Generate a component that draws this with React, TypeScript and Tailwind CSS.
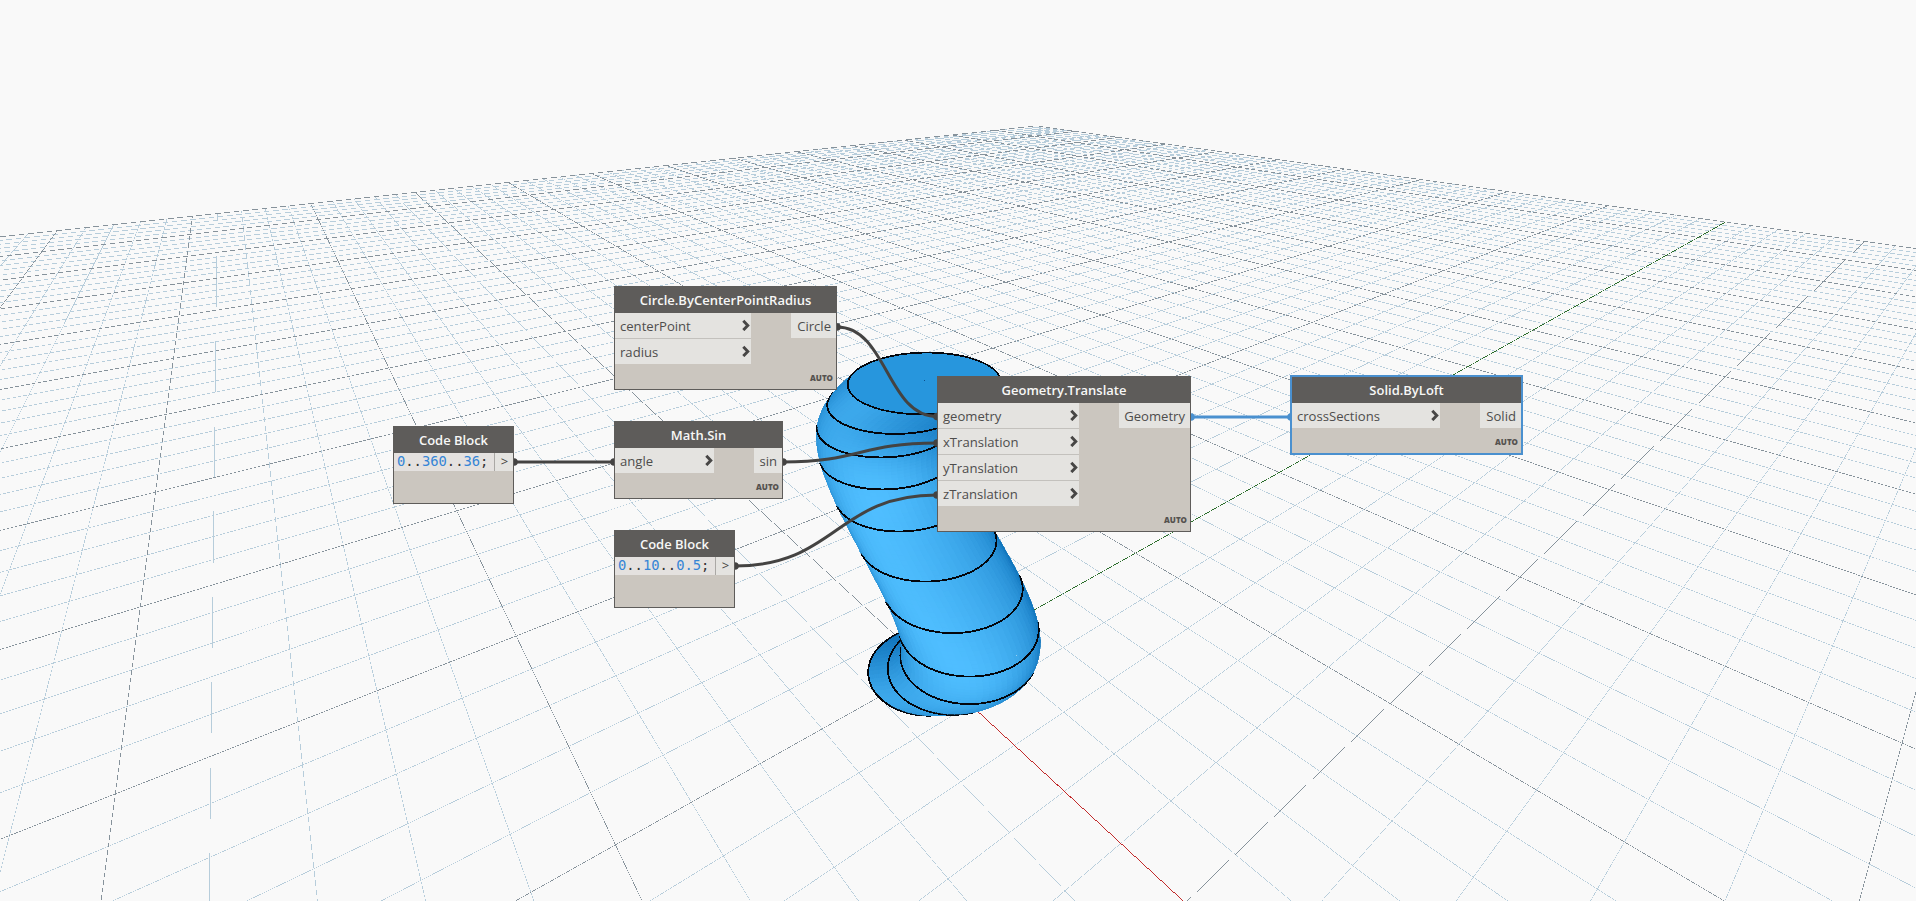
import React from 'react';

type Vec = [number, number];
type Vec3 = [number, number, number];

const WIDTH = 1916;
const HEIGHT = 901;

/* ---------- Camera: origin and vanishing points of the three world axes ---------- */
const ORIGIN: Vec = [930.7, 668];
const VANISH_X: Vec = [219.67, 12];
const VANISH_Y: Vec = [2100, 12];
const VANISH_Z: Vec = [958, 1935];
const SCALE_X = 0.05274;
const SCALE_Y = 0.04247;
const SCALE_Z = 0.03695;
const CAMERA: Vec3 = [7.86, -5.75, 9.23];
const LIGHT: Vec3 = [0.6, -0.69, 0.4];

function project(x: number, y: number, z: number): Vec {
  const a = -x * SCALE_X;
  const b = y * SCALE_Y;
  const c = -z * SCALE_Z;
  const w = 1 + a + b + c;
  return [
    (ORIGIN[0] + a * VANISH_X[0] + b * VANISH_Y[0] + c * VANISH_Z[0]) / w,
    (ORIGIN[1] + a * VANISH_X[1] + b * VANISH_Y[1] + c * VANISH_Z[1]) / w,
  ];
}

/* ---------- Ground grid ---------- */
const EXTENT = 50;
const GRID_LINE = 0.6;

function thinLine(p: Vec, q: Vec, width: number): string {
  const dx = q[0] - p[0];
  const dy = q[1] - p[1];
  const len = Math.hypot(dx, dy);
  const nx = ((-dy / len) * width) / 2;
  const ny = ((dx / len) * width) / 2;
  const f = (v: number) => v.toFixed(3);
  return `M${f(p[0] + nx)} ${f(p[1] + ny)}L${f(q[0] + nx)} ${f(q[1] + ny)}L${f(q[0] - nx)} ${f(q[1] - ny)}L${f(p[0] - nx)} ${f(p[1] - ny)}Z`;
}

/* Extends a line from its start, away from the vanishing point, to just outside the canvas. */
function ray(start: Vec, vanish: Vec, width = GRID_LINE): string {
  const dx = start[0] - vanish[0];
  const dy = start[1] - vanish[1];
  let t = (HEIGHT + 10 - start[1]) / dy;
  if (dx > 0) t = Math.min(t, (WIDTH + 10 - start[0]) / dx);
  if (dx < 0) t = Math.min(t, (-10 - start[0]) / dx);
  if (t <= 0) return '';
  return thinLine(start, [start[0] + dx * t, start[1] + dy * t], width);
}

function buildGrid() {
  let minor = '';
  let major = '';
  for (let i = -EXTENT; i <= EXTENT; i++) {
    const d = ray(project(i, EXTENT, 0), VANISH_Y) + ray(project(-EXTENT, i, 0), VANISH_X);
    if (i % 5 === 0) major += d;
    else minor += d;
  }
  return { minor, major };
}

const grid = buildGrid();
const redAxis = ray(ORIGIN, VANISH_X, 0.75);
const greenAxis = thinLine(ORIGIN, project(0, EXTENT, 0), 0.68);

/* ---------- Lofted solid ---------- */
const RINGS = 10;
const STEPS = 10;
const SEGMENTS = 72;
const TOP = 5;

const centre = (z: number) => Math.sin((2 * Math.PI * z) / TOP);
const slope = (z: number) => ((2 * Math.PI) / TOP) * Math.cos((2 * Math.PI * z) / TOP);

const normal = (theta: number, z: number): Vec3 => {
  const n: Vec3 = [Math.cos(theta), Math.sin(theta), -slope(z) * Math.cos(theta)];
  const len = Math.hypot(...n);
  return [n[0] / len, n[1] / len, n[2] / len];
};

const dot = (a: Vec3, b: Vec3) => a[0] * b[0] + a[1] * b[1] + a[2] * b[2];

function facing(theta: number, z: number): number {
  const v: Vec3 = [
    CAMERA[0] - centre(z) - Math.cos(theta),
    CAMERA[1] - Math.sin(theta),
    CAMERA[2] - z,
  ];
  return dot(normal(theta, z), v) / Math.hypot(...v);
}

function shade(theta: number, z: number): string {
  const d = Math.max(0, dot(normal(theta, z), LIGHT));
  const mix = (lo: number, hi: number) => Math.round(lo + (hi - lo) * d);
  return `rgb(${mix(18, 79)},${mix(118, 190)},${mix(190, 255)})`;
}

const onRing = (theta: number, z: number): Vec =>
  project(centre(z) + Math.cos(theta), Math.sin(theta), z);

const pt = (p: Vec) => `${p[0].toFixed(2)} ${p[1].toFixed(2)}`;

function ringPath(z: number, all: boolean): string {
  const n = 120;
  let d = '';
  let open = false;
  for (let k = 0; k < n; k++) {
    const t0 = (k / n) * 2 * Math.PI;
    const t1 = ((k + 1) / n) * 2 * Math.PI;
    if (all || facing((t0 + t1) / 2, z) > -0.03) {
      if (!open) d += `M${pt(onRing(t0, z))}`;
      d += `L${pt(onRing(t1, z))}`;
      open = true;
    } else {
      open = false;
    }
  }
  return d;
}

function Solid() {
  const parts: React.ReactElement[] = [];
  const total = RINGS * STEPS;
  for (let j = 0; j < total; j++) {
    const z0 = (j / total) * TOP;
    const z1 = ((j + 1) / total) * TOP;
    for (let k = 0; k < SEGMENTS; k++) {
      const t0 = (k / SEGMENTS) * 2 * Math.PI;
      const t1 = ((k + 1) / SEGMENTS) * 2 * Math.PI;
      if (facing((t0 + t1) / 2, (z0 + z1) / 2) < -0.04) continue;
      const colour = shade((t0 + t1) / 2, (z0 + z1) / 2);
      parts.push(
        <path
          key={`${j}-${k}`}
          d={`M${pt(onRing(t0, z0))}L${pt(onRing(t1, z0))}L${pt(onRing(t1, z1))}L${pt(onRing(t0, z1))}Z`}
          fill={colour}
          stroke={colour}
          strokeWidth={0.3}
        />,
      );
    }
    if (j % STEPS === 0) {
      parts.push(<path key={`ring-${j}`} d={ringPath(z0, false)} fill="none" stroke="#04060c" strokeWidth={1.8} />);
    }
  }
  parts.push(
    <path key="cap" d={ringPath(TOP, true) + 'Z'} fill="#2796dd" stroke="#04060c" strokeWidth={1.7} />,
  );
  return <g shapeRendering="crispEdges">{parts}</g>;
}

function Viewport() {
  return (
    <svg className="absolute inset-0" width={WIDTH} height={HEIGHT} viewBox={`0 0 ${WIDTH} ${HEIGHT}`}>
      <g shapeRendering="crispEdges">
        <path d={grid.minor} fill="#b7cddb" />
        <path d={grid.major} fill="#86929b" />
        <path d={redAxis} fill="#c22b2b" />
        <path d={greenAxis} fill="#2c6e2c" />
      </g>
      <Solid />
      <rect x={924} y={380} width={1} height={1} fill="#0b4f8c" />
    </svg>
  );
}

/* ---------- Connectors ---------- */
interface Wire {
  from: Vec;
  to: Vec;
  selected?: boolean;
}

const wires: Wire[] = [
  { from: [514, 462], to: [614, 462] },
  { from: [837, 327], to: [937, 416.5] },
  { from: [783, 462], to: [937, 443] },
  { from: [735, 566], to: [937, 495] },
  { from: [1191, 417], to: [1291, 417], selected: true },
];

function Wires() {
  return (
    <svg className="absolute inset-0" width={WIDTH} height={HEIGHT} viewBox={`0 0 ${WIDTH} ${HEIGHT}`}>
      {wires.map(({ from, to, selected }, i) => {
        const mid = (from[0] + to[0]) / 2;
        const colour = selected ? '#4a90cf' : '#444342';
        return (
          <g key={i} fill={colour}>
            <path
              d={`M${from[0]} ${from[1]}C${mid} ${from[1]} ${mid} ${to[1]} ${to[0]} ${to[1]}`}
              fill="none"
              stroke={colour}
              strokeWidth={3}
            />
            <circle cx={from[0]} cy={from[1]} r={3.8} />
            <circle cx={to[0]} cy={to[1]} r={3.8} />
          </g>
        );
      })}
    </svg>
  );
}

/* ---------- Nodes ---------- */
function Chevron() {
  return (
    <svg className="mt-[-1px] shrink-0" width="8" height="12" viewBox="0 0 8 12">
      <path d="M1.3 1.7 5.8 6.4 1.3 11.1" fill="none" stroke="#474645" strokeWidth="2.9" />
    </svg>
  );
}

function Header({ title }: { title: string }) {
  return (
    <div className="flex h-[26px] shrink-0 items-center justify-center bg-[#5e5c5a] text-[13px] font-semibold text-[#f7f7f6]">
      <span className="mt-[1px] whitespace-nowrap">{title}</span>
    </div>
  );
}

interface NodeProps {
  title: string;
  place: string;
  inputs: string[];
  inputWidth: string;
  output: string;
  outputWidth: string;
  selected?: boolean;
}

function GraphNode({ title, place, inputs, inputWidth, output, outputWidth, selected }: NodeProps) {
  const frame = selected
    ? 'border-[#4a90cf] shadow-[0_0_0_1px_#4a90cf]'
    : 'border-[#5e5c5a]';
  return (
    <section className={`absolute flex flex-col border bg-[#cbc6bf] ${frame} ${place}`}>
      <Header title={title} />
      <div className="flex flex-1 justify-between">
        <div className={`flex flex-col ${inputWidth}`}>
          {inputs.map((name, i) => (
            <div
              key={name}
              className={`flex items-center justify-between bg-[#e4e3e0] pl-[5px] pr-[1px] text-[13.1px] text-[#4e4d4c] ${i < inputs.length - 1 ? 'h-[26px] border-b border-[#c3c1bd]' : 'h-[25px]'}`}
            >
              <span className="mt-[2px]">{name}</span>
              <Chevron />
            </div>
          ))}
        </div>
        <div className={`flex h-[25px] items-center justify-end bg-[#e4e3e0] pr-[5px] text-[13.1px] text-[#4e4d4c] ${outputWidth}`}>
          <span className="mt-[2px]">{output}</span>
        </div>
      </div>
      <div className="flex h-[16px] shrink-0 items-start justify-end pr-[3px] text-[8px] leading-[10px] font-extrabold text-[#55524f]">
        AUTO
      </div>
    </section>
  );
}

function CodeBlock({ place, code }: { place: string; code: string[] }) {
  return (
    <section className={`absolute flex h-[78px] w-[121px] flex-col border border-[#5e5c5a] bg-[#cbc6bf] ${place}`}>
      <Header title="Code Block" />
      <div className="flex">
        <pre className="h-[18px] w-[100px] bg-[#e4e1df] pl-[3px] font-['DejaVu_Sans_Mono',monospace] text-[13.8px] leading-[17px] text-[#333333]">
          {code.map((part, i) => (
            <span key={i} className={/\d/.test(part) ? 'text-[#3585d6]' : ''}>
              {part}
            </span>
          ))}
        </pre>
        <div className="flex h-[18px] flex-1 items-center justify-center border-l border-[#aaa8a5] bg-[#e4e3e0] pl-[1px] text-[13px] text-[#444342]">
          &gt;
        </div>
      </div>
    </section>
  );
}

export default function App() {
  return (
    <main className="relative h-[901px] w-[1916px] overflow-hidden bg-[#f9f9f9] font-['Open_Sans',sans-serif]">
      <Viewport />
      <Wires />
      <CodeBlock place="left-[393px] top-[426px]" code={['0', '..', '360', '..', '36', ';']} />
      <CodeBlock place="left-[614px] top-[530px]" code={['0', '..', '10', '..', '0.5', ';']} />
      <GraphNode
        title="Circle.ByCenterPointRadius"
        place="left-[614px] top-[286px] h-[104px] w-[223px]"
        inputs={['centerPoint', 'radius']}
        inputWidth="w-[136px]"
        output="Circle"
        outputWidth="w-[45px]"
      />
      <GraphNode
        title="Math.Sin"
        place="left-[614px] top-[421px] h-[78px] w-[169px]"
        inputs={['angle']}
        inputWidth="w-[99px]"
        output="sin"
        outputWidth="w-[28px]"
      />
      <GraphNode
        title="Geometry.Translate"
        place="left-[937px] top-[376px] h-[156px] w-[254px]"
        inputs={['geometry', 'xTranslation', 'yTranslation', 'zTranslation']}
        inputWidth="w-[141px]"
        output="Geometry"
        outputWidth="w-[71px]"
      />
      <GraphNode
        title="Solid.ByLoft"
        place="left-[1291px] top-[376px] h-[78px] w-[231px]"
        inputs={['crossSections']}
        inputWidth="w-[148px]"
        output="Solid"
        outputWidth="w-[41px]"
        selected
      />
    </main>
  );
}
